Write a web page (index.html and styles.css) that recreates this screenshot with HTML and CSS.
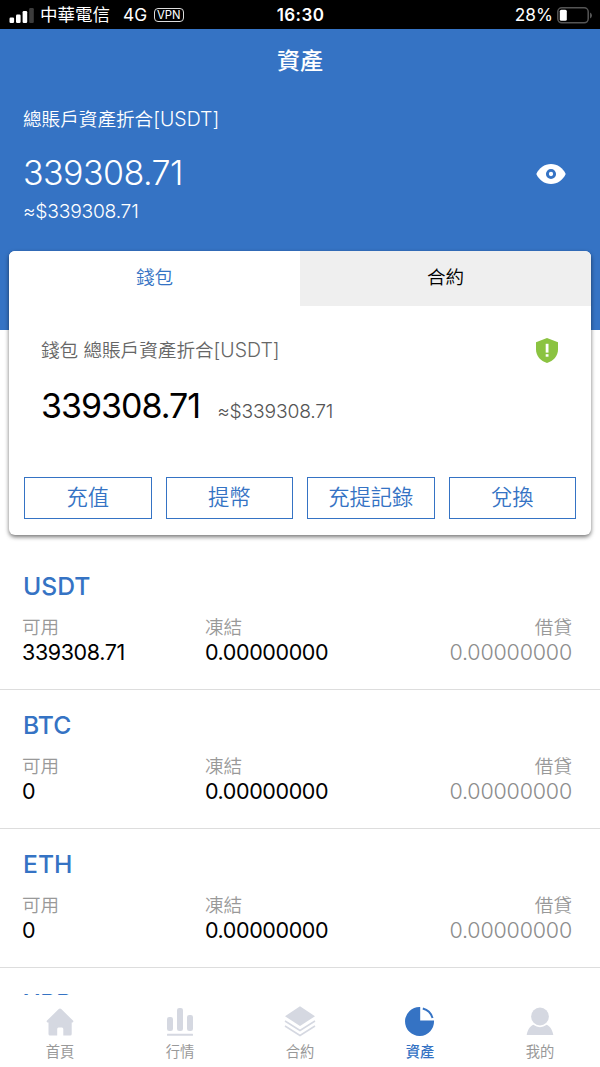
FILE: index.html
```html
<!DOCTYPE html>
<html lang="zh-Hant">
<head>
  <meta charset="UTF-8">
  <title>資產</title>
  <meta name="viewport" content="width=device-width, initial-scale=1.0">
  <link rel="stylesheet" href="styles.css">
</head>
<body>

<div class="app">
  <div class="status-bar">
    <div class="status-left">
      <svg class="signal" width="25" height="16" viewBox="0 0 25 16">
        <rect x="0.500" y="10.500" width="4.600" height="5.500" rx="1.200" fill="#fff"/>
        <rect x="7" y="7.500" width="4.600" height="8.500" rx="1.200" fill="#fff"/>
        <rect x="13.600" y="4" width="4.600" height="12" rx="1.200" fill="#fff"/>
        <rect x="20.200" y="1" width="4.600" height="15" rx="1.200" fill="#3c3c3c"/>
      </svg>
      <span class="carrier">中華電信</span>
      <span class="network">4G</span>
      <span class="vpn">VPN</span>
    </div>
    <div class="status-time">16:30</div>
    <div class="status-right">
      <span class="percent">28%</span>
      <svg width="35" height="17" viewBox="0 0 35 17">
        <rect x="0.800" y="0.800" width="30.400" height="15" rx="4" fill="none" stroke="#555" stroke-width="1.500"/>
        <rect x="2.800" y="2.800" width="7" height="11" rx="1.500" fill="#fff"/>
        <path d="M33 5.500 Q35 6.500 35 8.500 Q35 10.500 33 11.500 Z" fill="#555"/>
      </svg>
    </div>
  </div>

  <header class="header">
    <h1 class="title">資產</h1>
    <div class="total-label">總賬戶資產折合<span class="unit">[USDT]</span></div>
    <div class="total-row">
      <div class="total-value">339308.71</div>
      <svg class="eye" width="30" height="20" viewBox="0 0 30 20">
        <path d="M0.300 10 C3 4 8.500 0 15 0 S27 4 29.700 10 C27 16 21.500 20 15 20 S3 16 0.300 10 Z" fill="#fff"/>
        <circle cx="15" cy="10" r="3.600" fill="#fff" stroke="#3573c4" stroke-width="2.900"/>
      </svg>
    </div>
    <div class="total-approx">≈$339308.71</div>
  </header>

  <section class="card">
    <div class="tabs">
      <div class="tab active">錢包</div>
      <div class="tab">合約</div>
    </div>
    <div class="card-label">
      <div>錢包 總賬戶資產折合<span class="unit">[USDT]</span></div>
      <svg width="22" height="25" viewBox="0 0 22 25">
        <path d="M11 0 L22 4.200 V11.500 C22 18 17.500 23 11 25 C4.500 23 0 18 0 11.500 V4.200 Z" fill="#8bc341"/>
        <rect x="9.700" y="5.800" width="2.800" height="8.800" fill="#fff"/>
        <rect x="9.700" y="16.200" width="2.800" height="2.500" fill="#fff"/>
      </svg>
    </div>
    <div class="card-amount">
      <span class="card-value">339308.71</span>
      <span class="card-approx">≈$339308.71</span>
    </div>
    <div class="actions">
      <button>充值</button>
      <button>提幣</button>
      <button>充提記錄</button>
      <button>兌換</button>
    </div>
  </section>

  <main class="coins">
    <div class="coin">
      <h2>USDT</h2>
      <div class="coin-row">
        <div class="col"><span>可用</span><b>339308.71</b></div>
        <div class="col"><span>凍結</span><b>0.00000000</b></div>
        <div class="col loan"><span>借貸</span><b>0.00000000</b></div>
      </div>
    </div>
    <div class="coin">
      <h2>BTC</h2>
      <div class="coin-row">
        <div class="col"><span>可用</span><b>0</b></div>
        <div class="col"><span>凍結</span><b>0.00000000</b></div>
        <div class="col loan"><span>借貸</span><b>0.00000000</b></div>
      </div>
    </div>
    <div class="coin">
      <h2>ETH</h2>
      <div class="coin-row">
        <div class="col"><span>可用</span><b>0</b></div>
        <div class="col"><span>凍結</span><b>0.00000000</b></div>
        <div class="col loan"><span>借貸</span><b>0.00000000</b></div>
      </div>
    </div>
    <div class="coin">
      <h2>XRP</h2>
    </div>
  </main>

  <nav class="tabbar">
    <div class="nav-item">
      <svg width="32" height="32" viewBox="0 0 32 32" fill="#d5d8e1">
        <path d="M16 2.500 Q16.700 2.500 17.500 3.300 L29.200 14.800 Q29.800 16.300 28.500 16.500 H27.700 V28 Q27.700 29.500 26.200 29.500 H19.300 V23 Q19.300 21.500 18 21.500 H14.500 Q13.200 21.500 13.200 23 V29.500 H6 Q4.500 29.500 4.500 28 V16.500 H3.500 Q2.200 16.300 2.800 14.800 L14.500 3.300 Q15.300 2.500 16 2.500 Z"/>
      </svg>
      <span>首頁</span>
    </div>
    <div class="nav-item">
      <svg width="32" height="32" viewBox="0 0 32 32" fill="#d5d8e1">
        <rect x="3" y="11" width="6" height="14" rx="2.200"/>
        <rect x="13" y="2" width="6" height="23" rx="2.200"/>
        <rect x="23" y="9" width="6" height="16" rx="2.200"/>
        <rect x="3" y="27.700" width="26" height="2" rx="0.500"/>
      </svg>
      <span>行情</span>
    </div>
    <div class="nav-item">
      <svg width="32" height="32" viewBox="0 0 32 32" fill="#d5d8e1">
        <path d="M16 0.300 L31 10.200 L16 20 L1 10.200 Z"/>
        <path d="M1 15 L16 24.500 L31 15 M1 20 L16 29.500 L31 20" fill="none" stroke="#d5d8e1" stroke-width="1.500"/>
      </svg>
      <span>合約</span>
    </div>
    <div class="nav-item active">
      <svg width="32" height="32" viewBox="0 0 32 32" fill="#3573c4">
        <path d="M16.200 1 V14.500 H30 A14.500 14.500 0 1 1 16.200 1 Z"/>
        <path d="M18.800 2.500 A13.500 13.500 0 0 1 28.500 12" fill="none" stroke="#3573c4" stroke-width="2"/>
      </svg>
      <span>資產</span>
    </div>
    <div class="nav-item">
      <svg width="32" height="32" viewBox="0 0 32 32" fill="#d5d8e1">
        <circle cx="16" cy="10.500" r="8.900"/>
        <path d="M2.700 29 C3.500 24.500 5.500 20.500 9.300 18.800 Q16 23.500 22.700 18.800 C26.500 20.500 28.500 24.500 29.300 29 Z"/>
      </svg>
      <span>我的</span>
    </div>
  </nav>
</div>

</body>
</html>
```
FILE: styles.css
```css
* {
  box-sizing: border-box;
}

body {
  margin: 0;
  font-family: Inter, "Noto Sans CJK TC", sans-serif;
  background: #fff;
  color: #000;
}

.app {
  display: flex;
  flex-direction: column;
  height: 1067px;
  overflow: hidden;
}

.status-bar {
  display: grid;
  grid-template-columns: 1fr auto 1fr;
  align-items: center;
  flex: none;
  height: 29px;
  padding: 1px 8px 0 9px;
  background: #000;
  color: #fff;
  font-size: 18px;
  line-height: 28px;
}

.status-left,
.status-right {
  display: flex;
  align-items: center;
}

.status-right {
  justify-content: flex-end;
  gap: 4px;
}

.carrier {
  margin-left: 6px;
  font-size: 17.5px;
}

.network {
  margin-left: 13px;
  font-size: 17.3px;
}

.vpn {
  margin: 0 0 1px 7px;
  padding: 0 2px;
  border: 1px solid #ddd;
  border-radius: 4px;
  font-size: 11.3px;
  font-weight: 400;
  line-height: 12px;
}

.status-time {
  font-size: 17px;
  font-weight: 600;
  letter-spacing: 0.4px;
}

.percent {
  font-size: 17.3px;
}

.header {
  flex: none;
  height: 301px;
  padding: 0 24px;
  background: #3573c4;
  color: #fff;
  font-weight: 350;
}

.title {
  margin: 0;
  height: 62px;
  font-size: 23px;
  font-weight: 500;
  line-height: 64px;
  text-align: center;
}

.unit {
  font-size: 19.5px;
}

.total-label {
  margin: 14px 0 0 -1px;
  font-size: 18.6px;
  line-height: 28px;
}

.total-row {
  display: flex;
  justify-content: space-between;
  align-items: center;
  height: 44px;
  margin: 17px 0 0 -1px;
  padding-right: 10px;
}

.eye {
  margin-top: 3px;
}

.total-value {
  font-size: 34px;
  letter-spacing: -0.55px;
}

.total-approx {
  margin: 5px 0 0 -1px;
  font-size: 19.3px;
  letter-spacing: -0.25px;
  line-height: 24px;
}

.card {
  position: relative;
  flex: none;
  height: 284px;
  margin: -79px 9px 0;
  border-radius: 6px;
  background: #fff;
  box-shadow: 0 2px 4px rgba(0, 0, 0, 0.55);
  overflow: hidden;
}

.tabs {
  display: flex;
  height: 55px;
}

.tab {
  flex: 1;
  background: #efefef;
  font-size: 18.6px;
  font-weight: 350;
  line-height: 53px;
  text-align: center;
}

.tab.active {
  background: #fff;
  color: #3573c4;
}

.card-label {
  display: flex;
  justify-content: space-between;
  align-items: center;
  height: 28px;
  margin-top: 30px;
  padding: 0 33px 0 32px;
  color: #666;
  font-size: 18.6px;
  font-weight: 350;
  line-height: 30px;
}

.card-amount {
  display: flex;
  align-items: baseline;
  gap: 17px;
  height: 44px;
  margin-top: 20px;
  padding-left: 32px;
  line-height: 44px;
}

.card-value {
  font-size: 34px;
  letter-spacing: -1px;
}

.card-approx {
  color: #555;
  font-size: 19.3px;
  font-weight: 350;
  letter-spacing: -0.2px;
}

.actions {
  display: grid;
  grid-template-columns: repeat(4, 1fr);
  gap: 14px;
  margin-top: 49px;
  padding: 0 15px;
}

.actions button {
  height: 42px;
  padding: 0 0 5px;
  border: 1.5px solid #3573c4;
  background: none;
  color: #3573c4;
  font: inherit;
  font-size: 21.3px;
  font-weight: 350;
}

.coins {
  flex: 1;
  min-height: 0;
  padding-top: 16px;
  overflow: hidden;
}

.coin {
  height: 139px;
  padding: 19px 28px 0 22px;
  border-bottom: 1px solid #ddd;
}

.coin h2 {
  margin: 0 0 0 1px;
  color: #3573c4;
  font-size: 24.7px;
  font-weight: 500;
  line-height: 32px;
}

.coin-row {
  display: grid;
  grid-template-columns: 183px 1fr 1fr;
  margin-top: 13px;
}

.col {
  display: flex;
  flex-direction: column;
}

.col span {
  color: #999;
  font-size: 18.6px;
  font-weight: 350;
  line-height: 25px;
}

.col b {
  font-size: 21.5px;
  font-weight: 400;
  letter-spacing: -0.4px;
  line-height: 25px;
}

.col.loan {
  align-items: flex-end;
}

.loan b {
  color: #8c8c8c;
  font-weight: 350;
  letter-spacing: -0.2px;
}

.tabbar {
  display: flex;
  flex: none;
  height: 72px;
  padding-top: 11px;
  background: #fff;
}

.nav-item {
  display: flex;
  flex: 1;
  flex-direction: column;
  align-items: center;
  color: #999;
  font-size: 14.3px;
  line-height: 27px;
}

.nav-item.active {
  color: #3573c4;
  font-weight: 500;
}
```
